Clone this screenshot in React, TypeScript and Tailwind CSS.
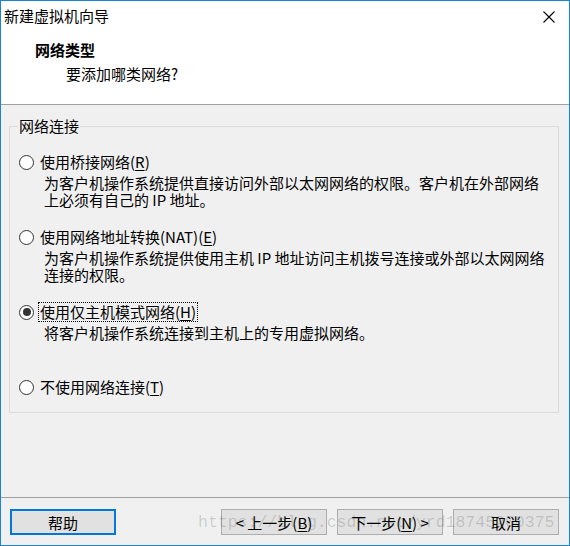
import React from 'react'

const font = { fontFamily: '"Noto Sans CJK SC", "Microsoft YaHei", sans-serif' }

interface OptionProps {
  label: string
  keyChar: string
  lines: string[]
  checked?: boolean
  focused?: boolean
  first?: boolean
}

function Option({ label, keyChar, lines, checked, focused, first }: OptionProps) {
  return (
    <div className={first ? 'mt-[17px]' : 'mt-[19px]'}>
      <div className="flex items-center h-[20px]">
        <span className="-ml-[1px] w-[15px] h-[15px] rounded-full border border-[#333] bg-white flex items-center justify-center shrink-0">
          {checked && <span className="w-[8px] h-[8px] rounded-full bg-[#333]" />}
        </span>
        <span
          className={`ml-[4px] px-[1px] leading-[18px] border border-dotted ${focused ? 'border-black' : 'border-transparent'}`}
        >
          {label}(<span className="underline underline-offset-2">{keyChar}</span>)
        </span>
      </div>
      {lines.length > 0 && (
        <div className="mt-[2px] ml-[24px] min-h-[34px] leading-[17px]">
          {lines.map((l, i) => (
            <div key={i}>{l}</div>
          ))}
        </div>
      )}
    </div>
  )
}

function Button({ children, primary }: { children: React.ReactNode; primary?: boolean }) {
  return (
    <button
      className={`w-[106px] h-[26px] bg-[#e1e1e1] flex items-center justify-center text-[15px] leading-none text-black ${
        primary ? 'border-2 border-[#0078d7]' : 'border border-[#adadad]'
      }`}
    >
      {children}
    </button>
  )
}

export default function App() {
  return (
    <div
      className="relative w-[570px] h-[546px] border border-[#1883d7] bg-[#f0f0f0] flex flex-col text-[15px] text-black overflow-hidden"
      style={font}
    >
      {/* title + header */}
      <div className="h-[104px] bg-white border-b border-[#a0a0a0] shrink-0">
        <div className="h-[31px] flex items-center justify-between pl-[3px] pr-[14px]">
          <span>新建虚拟机向导</span>
          <svg width="12" height="12" viewBox="0 0 12 12">
            <path d="M0.5 0.5 L11.5 11.5 M11.5 0.5 L0.5 11.5" stroke="#000" strokeWidth="1.1" />
          </svg>
        </div>
        <div className="mt-[8px] pl-[34px] font-bold leading-[20px]">网络类型</div>
        <div className="mt-[4px] pl-[65px] leading-[20px]">要添加哪类网络?</div>
      </div>

      {/* body */}
      <div className="flex-1">
        <fieldset className="mt-[12px] ml-[8px] mr-[10px] border border-[#dcdcdc] pl-[10px] pr-[8px] pb-[15px]">
          <legend className="-ml-[2px] px-[1px] leading-[18px]">网络连接</legend>
          <Option
            first
            label="使用桥接网络"
            keyChar="R"
            lines={['为客户机操作系统提供直接访问外部以太网网络的权限。客户机在外部网络', '上必须有自己的 IP 地址。']}
          />
          <Option
            label="使用网络地址转换(NAT)"
            keyChar="E"
            lines={['为客户机操作系统提供使用主机 IP 地址访问主机拨号连接或外部以太网网络', '连接的权限。']}
          />
          <Option
            checked
            focused
            label="使用仅主机模式网络"
            keyChar="H"
            lines={['将客户机操作系统连接到主机上的专用虚拟网络。']}
          />
          <Option label="不使用网络连接" keyChar="T" lines={[]} />
        </fieldset>
      </div>

      {/* footer */}
      <div className="h-[48px] border-t border-[#a0a0a0] shrink-0 flex items-start justify-between pt-[11px] pl-[9px] pr-[10px]">
        <Button primary>帮助</Button>
        <div className="flex gap-[10px]">
          <Button>
            &lt; 上一步(<span className="underline underline-offset-2">B</span>)
          </Button>
          <Button>
            下一步(<span className="underline underline-offset-2">N</span>) &gt;
          </Button>
          <Button>取消</Button>
        </div>
      </div>

      {/* watermark */}
      <div
        className="absolute left-[197px] top-[512px] text-[16.5px] leading-[20px] text-[rgba(0,0,0,0.16)] pointer-events-none whitespace-nowrap"
        style={{ fontFamily: '"Liberation Mono", monospace' }}
      >
        https://blog.csdn.net/yrd18745200375
      </div>
    </div>
  )
}
